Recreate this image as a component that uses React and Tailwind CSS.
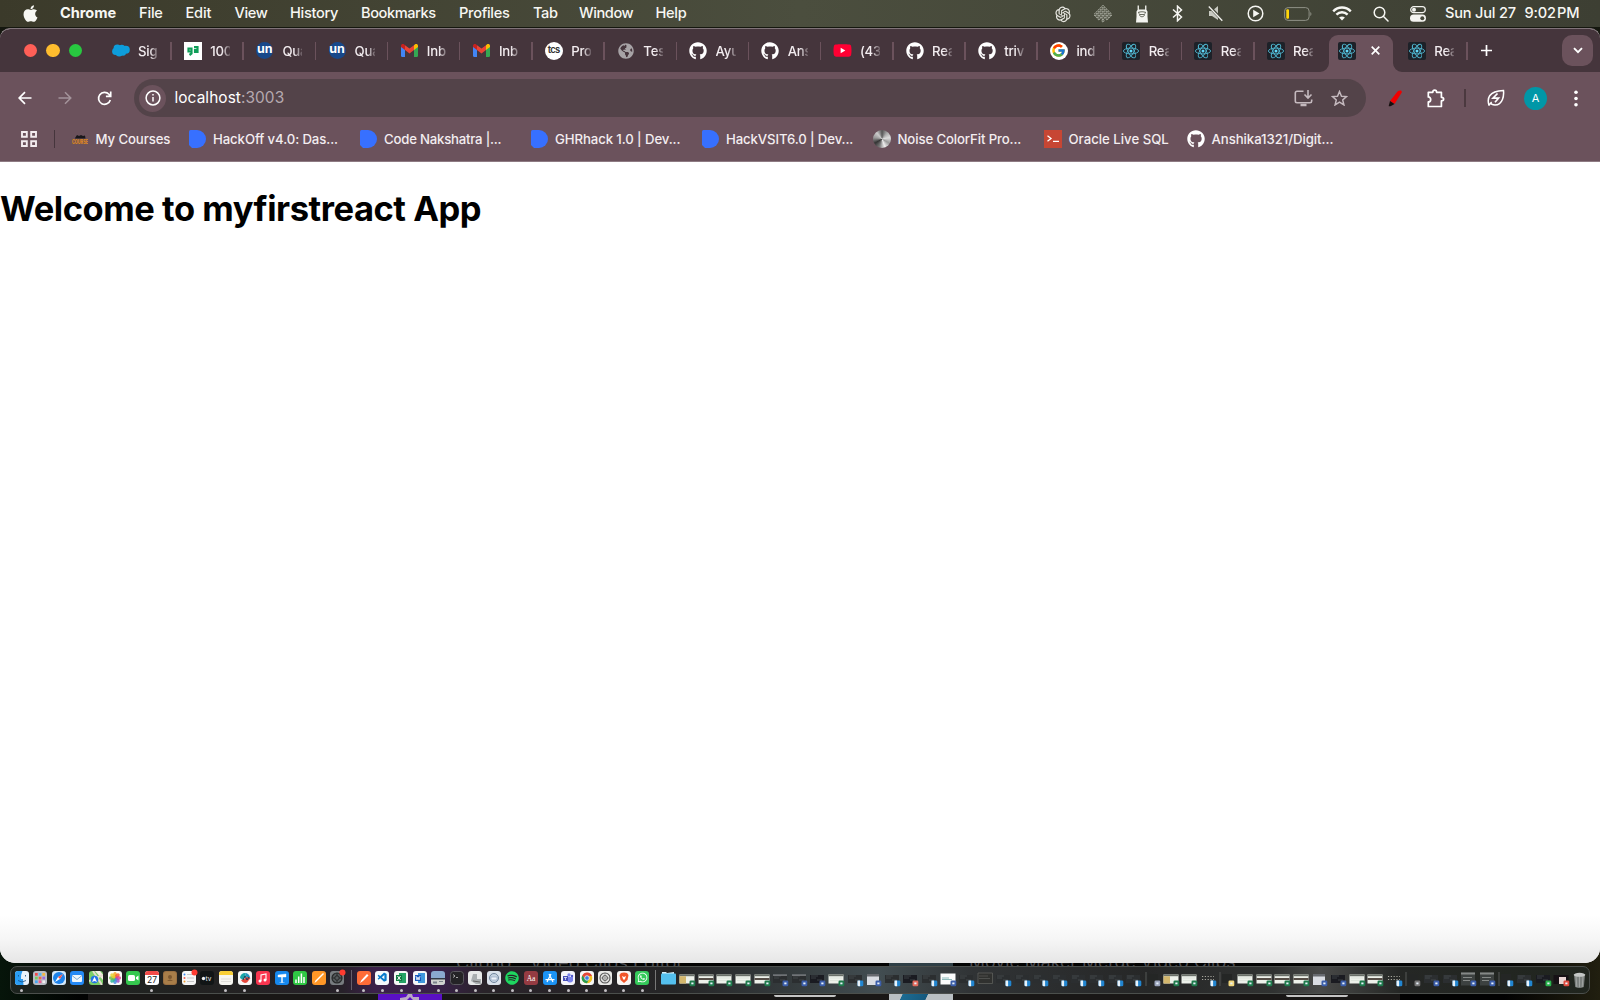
import React from "react";
import { FaApple, FaGithub, FaYoutube, FaWhatsapp, FaSpotify, FaGlobeAmericas } from "react-icons/fa";
import { FcGoogle } from "react-icons/fc";
import { AiOutlineOpenAI } from "react-icons/ai";
import { VscVscode } from "react-icons/vsc";

const menus = [
  ["Chrome", "w-[79px] font-bold tracking-[-0.05px]"],
  ["File", "w-[46.5px] tracking-[-0.2px]"],
  ["Edit", "w-[49px] tracking-[-0.2px]"],
  ["View", "w-[55.5px] tracking-[-0.4px]"],
  ["History", "w-[71px] tracking-[-0.3px]"],
  ["Bookmarks", "w-[98px] tracking-[-0.42px]"],
  ["Profiles", "w-[74px] tracking-[-0.3px]"],
  ["Tab", "w-[46px] tracking-[-0.4px]"],
  ["Window", "w-[76.5px] tracking-[-0.42px]"],
  ["Help", "tracking-[-0.3px]"],
];

function Cell({ w, children }) {
  return <div className={`${w} flex shrink-0 items-center justify-center`}>{children}</div>;
}

const lattice = [[9], [7, 11], [5, 9, 13], [3, 7, 11, 15], [1, 5, 9, 13, 17], [3, 7, 11, 15], [5, 9, 13], [9]];

function LatticeIcon() {
  return (
    <svg width="18" height="18" viewBox="0 0 18 18" fill="none" stroke="#b3b5a9" strokeWidth="0.8">
      {lattice.map((row, r) => row.map((x) => {
        const y = 1.500 + r * 2.050;
        return <path key={`${r}-${x}`} d={`M${x} ${y - 1.300}L${x + 1.300} ${y}L${x} ${y + 1.300}L${x - 1.300} ${y}Z`} />;
      }))}
    </svg>
  );
}

function Llama() {
  return (
    <svg width="14" height="18" viewBox="0 0 14 18">
      <path d="M2.600.5h1.300v4h6.200v-4h1.300v4.300l1.100 1.700v5l.5 6H1l.5-6v-5l1.100-1.700z" fill="#f4f4f0" />
      <path d="M3 7.500c2.500-1 5.500-1 8 0M4.500 9.500c0 3 5 3 5 0zM3.500 8.200h1M9.500 8.200h1" fill="none" stroke="#45483a" strokeWidth=".8" />
    </svg>
  );
}

function MenuBar() {
  return (
    <div className="flex h-[27px] items-center bg-linear-to-r from-[#3b3a2a] via-[#4b4e3e] to-[#3d3f33] text-[14.6px] leading-none font-medium text-[#f7f7f3]">
      <div className="flex w-[60px] pl-[20.500px] pb-px"><FaApple size={19} /></div>
      {menus.map(([t, c]) => (
        <div key={t} className={`${c} shrink-0 whitespace-nowrap`}>{t}</div>
      ))}
      <div className="ml-auto flex items-center">
        <Cell w="w-[40px]"><AiOutlineOpenAI size={20} color="#e4e4de" /></Cell>
        <Cell w="w-[40px]"><LatticeIcon /></Cell>
        <Cell w="w-[37px]"><Llama /></Cell>
        <Cell w="w-[34px]">
          <svg width="11" height="17" viewBox="0 0 11 17" fill="none" stroke="currentColor" strokeWidth="1.500"><path d="M1 4.500 9.500 12 5.500 15.800V1.200L9.500 5 1 12.500" /></svg>
        </Cell>
        <Cell w="w-[44px]">
          <svg width="16" height="17" viewBox="0 0 16 17"><path d="M1 6h3l6-5v14l-6-4H1z" fill="#c9cac2" /><path d="m1 1 13.500 14.500" stroke="#45473a" strokeWidth="3" /><path d="m.8 1.500 13.500 14.200" stroke="#f2f2ee" strokeWidth="1.300" /></svg>
        </Cell>
        <Cell w="w-[35px]">
          <svg width="17" height="17" viewBox="0 0 17 17"><circle cx="8.500" cy="8.500" r="7.300" fill="none" stroke="currentColor" strokeWidth="1.500" /><path d="m6.200 4.800 6.300 3.700-6.300 3.700z" fill="currentColor" /></svg>
        </Cell>
        <Cell w="w-[49px]">
          <svg width="28" height="14" viewBox="0 0 28 14"><rect x=".6" y=".6" width="24.500" height="12.800" rx="3.500" fill="none" stroke="#8f9186" /><rect x="2.300" y="2.200" width="2.700" height="9.600" rx="1" fill="#ffd60a" /><path d="M26.300 5v4c1.500-.6 1.500-3.400 0-4z" fill="#8f9186" /></svg>
        </Cell>
        <Cell w="w-[40px]">
          <svg width="20" height="15" viewBox="0 0 20 15" fill="none" stroke="currentColor" strokeWidth="2.400"><path d="M1.200 5.300c5-5 12.600-5 17.600 0M4.400 8.700c3.200-3.200 8-3.200 11.200 0" /><path d="m10 14.500-2.900-3c1.700-1.500 4.100-1.500 5.800 0z" fill="currentColor" stroke="none" /></svg>
        </Cell>
        <Cell w="w-[38px]">
          <svg width="16" height="16" viewBox="0 0 16 16" fill="none" stroke="currentColor" strokeWidth="1.500"><circle cx="6.500" cy="6.500" r="5.300" /><path d="m10.300 10.300 4.700 4.700" strokeLinecap="round" /></svg>
        </Cell>
        <Cell w="w-[36px]">
          <svg width="16" height="16" viewBox="0 0 16 16"><rect x=".7" y=".7" width="14.600" height="6" rx="3" fill="none" stroke="#f4f4f0" strokeWidth="1.200" /><circle cx="4" cy="3.700" r="2" fill="#f4f4f0" /><rect y="8.600" width="16" height="7.200" rx="3.600" fill="#f4f4f0" /><circle cx="12.300" cy="12.200" r="2" fill="#45473a" /></svg>
        </Cell>
        <div className="ml-[9px] flex w-[155px] whitespace-nowrap">
          <span className="w-[79.500px] tracking-[-0.2px]">Sun Jul 27</span><span className="tracking-[-0.15px]">9:02&#8202;PM</span>
        </div>
      </div>
    </div>
  );
}

function Gmail() {
  return (
    <svg width="17" height="13" viewBox="0 0 17 13">
      <path d="M0 2v9.500Q0 13 1.300 13H4V5z" fill="#4285f4" /><path d="M17 2v9.500q0 1.500-1.300 1.500H13V5z" fill="#34a853" />
      <path d="M13 1.200V6l4-3V2c0-2-2-2.500-3.200-1.500z" fill="#fbbc04" /><path d="M4 1.200V6L0 3V2C0 0 2-.5 3.200.5z" fill="#c5221f" /><path d="M4 1.200V6l4.500 3.400L13 6V1.200L8.500 4.600z" fill="#ea4335" />
    </svg>
  );
}

function ReactMark() {
  return (
    <svg width="18" height="18" viewBox="0 0 18 18">
      <rect width="18" height="18" rx="2" fill="#1d2128" />
      <g fill="none" stroke="#4fb6d0" strokeWidth=".9">
        <ellipse cx="9" cy="9" rx="7.600" ry="2.900" /><ellipse cx="9" cy="9" rx="7.600" ry="2.900" transform="rotate(60 9 9)" /><ellipse cx="9" cy="9" rx="7.600" ry="2.900" transform="rotate(120 9 9)" />
      </g>
      <circle cx="9" cy="9" r="1.500" fill="#61dafb" />
    </svg>
  );
}

const Cloud = () => (
  <svg width="18" height="13" viewBox="0 0 18 13" fill="#0d9ddb">
    <circle cx="5.300" cy="4.200" r="3.700" /><circle cx="9.800" cy="4" r="3.200" /><circle cx="13.800" cy="5.700" r="4" /><circle cx="3.500" cy="7.500" r="3.400" /><circle cx="7.200" cy="9" r="3.500" /><circle cx="11" cy="8.700" r="3" />
  </svg>
);
const Un = () => <div className="flex size-[17px] items-center justify-center rounded-full bg-[#17488a] text-[12.500px] leading-none font-bold text-white"><span className="-mt-[2px]">un</span></div>;
const Git = () => <FaGithub size={18} color="#fff" />;

const tabs = [
  [<Cloud />, "Sig"],
  [<div className="flex size-[18px] items-center justify-center bg-white"><svg width="12" height="11" viewBox="0 0 12 11" fill="none" stroke="#0f9d58" strokeWidth="2.200"><path d="M4.500 3.500H1.500v3h3zM4.500 5v3.500L2.500 10M7 2h3.500v5H8V4.800h2" /></svg></div>, "100"],
  [<Un />, "Qua"],
  [<Un />, "Qua"],
  [<Gmail />, "Inb"],
  [<Gmail />, "Inb"],
  [<div className="flex size-[18px] items-center justify-center rounded-full bg-white text-[9.500px] font-semibold tracking-[-0.800px] text-[#333]">tcs</div>, "Pro"],
  [<FaGlobeAmericas size={16} color="#a7a3a6" />, "Tes"],
  [<Git />, "Ayu"],
  [<Git />, "Ans"],
  [<FaYoutube size={19} color="#ff0033" className="bg-[linear-gradient(#fff,#fff)] bg-[length:8px_8px] bg-center bg-no-repeat" />, "(43"],
  [<Git />, "Rea"],
  [<Git />, "triv"],
  [<div className="flex size-[18px] items-center justify-center rounded-full bg-white"><FcGoogle size={15} /></div>, "ind"],
  [<ReactMark />, "Rea"],
  [<ReactMark />, "Rea"],
  [<ReactMark />, "Rea"],
];

function Tab({ icon, text, last }) {
  return (
    <div className="flex h-full w-[72.200px] shrink-0 items-center">
      <div className="ml-[11.500px] flex w-[19px] shrink-0 justify-center">{icon}</div>
      <div className="ml-[8px] w-[20px] overflow-hidden mask-r-from-60% mask-r-to-110% text-[13.200px] leading-[18px] font-medium tracking-[-0.2px] whitespace-nowrap text-[#f3edf0]">{text}</div>
      {!last && <div className="ml-auto h-[18px] w-[1.500px] bg-[#6b525c]" />}
    </div>
  );
}

function TabStrip() {
  return (
    <div className="flex h-[43px] items-center bg-[#45353c]">
      <div className="flex w-[99.500px] shrink-0 items-center gap-[9px] pl-[23.500px]">
        <i className="size-[13.500px] rounded-full bg-[#ff5f57]" /><i className="size-[13.500px] rounded-full bg-[#febc2e]" /><i className="size-[13.500px] rounded-full bg-[#28c840]" />
      </div>
      {tabs.map(([icon, text], i) => <Tab key={i} icon={icon} text={text} last={i === tabs.length - 1} />)}
      <div className="relative ml-[2.100px] flex h-[37px] w-[64px] shrink-0 items-center self-end rounded-t-[9px] bg-[#6b525c] pb-[6px] pl-[9px]">
        <svg className="absolute bottom-0 -left-[9px]" width="9" height="9"><path d="M9 0v9H0A9 9 0 0 0 9 0" fill="#6b525c" /></svg>
        <svg className="absolute -right-[9px] bottom-0" width="9" height="9"><path d="M0 0v9h9A9 9 0 0 1 0 0" fill="#6b525c" /></svg>
        <ReactMark />
        <svg className="ml-[15.500px]" width="9" height="9" viewBox="0 0 9 9" stroke="#fff" strokeWidth="1.700"><path d="m.7.7 7.600 7.600M8.300.7.7 8.300" /></svg>
      </div>
      <div className="ml-[3px] h-full"><Tab icon={<ReactMark />} text="Rea" /></div>
      <svg className="ml-[12.500px] shrink-0" width="13" height="13" viewBox="0 0 13 13" stroke="#fff" strokeWidth="1.700"><path d="M6.500 1v11M1 6.500h11" /></svg>
      <div className="mr-[7px] ml-auto flex size-[31px] items-center justify-center rounded-[10px] bg-[#6b525c]">
        <svg width="10" height="7" viewBox="0 0 10 7" fill="none" stroke="#fff" strokeWidth="1.900"><path d="m1 1.200 4 4 4-4" /></svg>
      </div>
    </div>
  );
}

function Toolbar() {
  return (
    <div className="flex h-[52px] items-center bg-[#6b525c] text-white">
      <svg className="ml-[18px]" width="14" height="14" viewBox="0 0 14 14" fill="none" stroke="#fff" strokeWidth="1.700"><path d="M13.500 7H1.500M7 1.200 1.200 7 7 12.800" /></svg>
      <svg className="ml-[26px]" width="14" height="14" viewBox="0 0 14 14" fill="none" stroke="#a3939a" strokeWidth="1.500"><path d="M.5 7h12M7 1.200 12.800 7 7 12.800" /></svg>
      <svg className="ml-[25px]" width="15" height="15" viewBox="0 0 15 15" fill="none" stroke="#fff" strokeWidth="1.700"><path d="M13.300 9A6 6 0 1 1 12 3.300l1.500 1.500M13.700 .5v4.800H8.900" /></svg>
      <div className="ml-[22px] flex h-[38px] w-[1232px] items-center rounded-full bg-[#534349]">
        <div className="ml-[5px] flex size-[27px] items-center justify-center rounded-full bg-[#6b525c]">
          <svg width="16" height="16" viewBox="0 0 16 16" fill="none" stroke="#fff" strokeWidth="1.500"><circle cx="8" cy="8" r="6.900" /><path d="M8 7v4.500M8 4v1.600" /></svg>
        </div>
        <div className="ml-[8.500px] text-[15.400px] leading-none tracking-[0.080px]">localhost<span className="text-[#b5a9af]">:3003</span></div>
        <svg className="ml-auto" width="19" height="17" viewBox="0 0 19 17" fill="none" stroke="#c4b9be" strokeWidth="1.600"><path d="M9.500 1.200H3A1.700 1.700 0 0 0 1.300 2.900v8.200A1.700 1.700 0 0 0 3 12.800h13a1.700 1.700 0 0 0 1.700-1.700V9.500M14 0v7.500M10.500 4.500 14 8l3.500-3.500" /><path d="M6.500 15h6" strokeWidth="2.500" /></svg>
        <svg className="mr-[18px] ml-[18px]" width="17" height="16" viewBox="0 0 17 16" fill="none" stroke="#c4b9be" strokeWidth="1.500"><path d="m8.500 1.500 2 4.700 5 .4-3.800 3.300 1.200 5-4.400-2.700-4.400 2.700 1.200-5L1.500 6.600l5-.4z" /></svg>
      </div>
      <svg className="ml-[22px]" width="15" height="17" viewBox="0 0 15 17"><path d="M9.500 1.500Q11 0 13 .5l1 1.500-7.500 12L2 11z" fill="#f00000" /><path d="m2 11 4.500 3L3 16q-2 .5-2.300 0z" fill="#16100f" /></svg>
      <svg className="ml-[23px]" width="19" height="19" viewBox="0 0 19 19" fill="none" stroke="#fff" strokeWidth="1.700"><path d="M2.300 3.300h4.500c0-3 3.800-3 3.800 0h4.800v5c3 0 3 3.600 0 3.600v5.600H2.300v-4.600c3.200 0 3.200-5 0-5z" strokeLinejoin="round" /></svg>
      <div className="ml-[19px] h-[18px] w-[2px] bg-[#4b393f]" />
      <svg className="ml-[20.500px]" width="18" height="18" viewBox="0 0 18 18" fill="none" stroke="#fff" strokeWidth="1.500"><path d="M2 16.500C0 10 1 2 16.500 1.500 17 6 16 16 8 16c-2 0-4-1-4.500-2.300M2 16.500c1-1.800 1.500-2.500 2.700-3.500" /><path d="M10.500 4.500 6 9.200h5.500L8 13.200" strokeWidth="1.700" /></svg>
      <div className="ml-[19.500px] flex size-[23px] items-center justify-center rounded-full bg-[#0097a7] text-[11px]">A</div>
      <svg className="ml-[26.500px]" width="4" height="17" fill="#fff"><circle cx="2" cy="2.300" r="1.800" /><circle cx="2" cy="8.500" r="1.800" /><circle cx="2" cy="14.700" r="1.800" /></svg>
    </div>
  );
}

const Dee = () => <svg width="17" height="18" viewBox="0 0 17 18"><path d="M0 1.500Q0 0 1.500 0H8a9 9 0 0 1 0 18H3L0 15z" fill="#3770ff" /></svg>;

const bookmarks = [
  ["w-[117px]", "w-[24px]", <svg width="16" height="9" viewBox="0 0 16 9"><path d="M3 3 5 0l2 1 2-1 2 1 2-.5.500 3H3z" fill="#19171a" /><text x="0" y="8.500" fontSize="5.500" fontWeight="800" textLength="16" lengthAdjust="spacingAndGlyphs" fill="#e08c18" fontFamily="Inter">COURSE</text></svg>, "My Courses", "tracking-[-0.1px]"],
  ["w-[171px]", "w-[24.500px]", <Dee />, "HackOff v4.0: Das...", "tracking-[-0.1px]"],
  ["w-[171px]", "w-[24.500px]", <Dee />, "Code Nakshatra |...", "tracking-[-0.22px]"],
  ["w-[171px]", "w-[24.500px]", <Dee />, "GHRhack 1.0 | Dev...", "tracking-[-0.1px]"],
  ["w-[171px]", "w-[24.500px]", <Dee />, "HackVSIT6.0 | Dev...", "tracking-[-0.12px]"],
  ["w-[171px]", "w-[25px]", <div className="size-[18px] rounded-full bg-[conic-gradient(#555,#aaa,#ddd,#999,#eee,#777,#333,#999,#ccc,#555)]" />, "Noise ColorFit Pro...", "tracking-[-0.12px]"],
  ["w-[143.500px]", "w-[25px]", <div className="flex size-[18px] items-center bg-[#c74634] pl-[3px]"><svg width="13" height="8" viewBox="0 0 13 8" fill="none" stroke="#fff" strokeWidth="1.300"><path d="m.5.8 3.500 2.700L.5 6.200M6 6.300h6" /></svg></div>, "Oracle Live SQL", ""],
  ["w-[150px]", "w-[24.500px]", <Git />, "Anshika1321/Digit...", "tracking-[-0.06px]"],
];

function Bookmarks() {
  return (
    <div className="flex h-[38px] items-center border-b border-[#8e7b83] bg-[#6b525c] pb-[7px]">
      <svg className="ml-[21px]" width="16" height="16" viewBox="0 0 16 16" fill="none" stroke="#f3edf0" strokeWidth="1.900"><path d="M1 1h4.800v4.800H1zM10.200 1H15v4.800h-4.800zM1 10.200h4.800V15H1zM10.200 10.200H15V15h-4.800z" /></svg>
      <div className="mr-[16.500px] ml-[16.500px] h-[18px] w-[1.500px] bg-[#45353c]" />
      {bookmarks.map(([w, iw, icon, text, track]) => (
        <div key={text} className={`${w} flex shrink-0 items-center`}>
          <div className={`${iw} shrink-0`}>{icon}</div>
          <div className={`${track} text-[13.200px] leading-[18px] font-medium whitespace-nowrap text-[#f3edf0]`}>{text}</div>
        </div>
      ))}
    </div>
  );
}

const svg = (bg, kids) => (
  <svg width="14" height="14" viewBox="0 0 14 14"><rect width="14" height="14" rx="3" fill={bg} />{kids}</svg>
);
const badge = <circle cx="12.500" cy="1.500" r="3" fill="#ff3b30" />;

const apps = [
  [svg("#e9f3fc", <><path d="M3 0h4.500Q5.500 4 6 8h2l.5 6H3a3 3 0 0 1-3-3V3a3 3 0 0 1 3-3" fill="#2a9df4" /><path d="M3.500 4v1.500M10.500 4v1.500M3 9.500q4 3 8 0" fill="none" stroke="#174b7d" strokeWidth=".8" /></>), 1],
  [svg("#b8bcc5", <>{["#f04a4a", "#55b6f1", "#f3b73f", "#77cf5d", "#f4683b", "#9b6bdf", "#4aa6ee", "#ee5c8f", "#eee"].map((c, i) => <rect key={i} x={2 + (i % 3) * 3.700} y={2 + Math.floor(i / 3) * 3.700} width="2.700" height="2.700" fill={c} />)}</>)],
  [svg("#d5e8f8", <><circle cx="7" cy="7" r="6" fill="#1d83ea" /><path d="M11 3 8 8 3 11l3-5z" fill="#fff" /><path d="M11 3 6 6l2 2z" fill="#f4534a" /></>)],
  [svg("#2489f5", <><rect x="2" y="4" width="10" height="7" rx="1" fill="#eef5fb" /><path d="m2 4.500 5 4 5-4" fill="none" stroke="#7eaad2" /></>)],
  [svg("#7bcf69", <><path d="M6 0h5L14 4v5z" fill="#f4eee4" /><path d="m0 10 14-6M4 0l9 14" stroke="#e5dccf" strokeWidth="2" /><circle cx="5.500" cy="8.500" r="3.800" fill="#2475e8" /><path d="M5.500 5.800 8 11l-2.500-1L3 11z" fill="#fff" /></>)],
  [svg("#fbfbf8", <>{["#f6a623", "#f7622c", "#e5428c", "#a054c5", "#468de3", "#2fb69b", "#70bd4a", "#e6cf31"].map((c, i) => <ellipse key={c} cx="7" cy="4" rx="1.900" ry="3" fill={c} opacity=".85" transform={`rotate(${i * 45} 7 7)`} />)}</>)],
  [svg("#35c84f", <><rect x="2" y="4" width="7" height="6" rx="1.500" fill="#fff" /><path d="m10 6.200 2.500-1.700v5L10 7.800z" fill="#fff" /></>)],
  [svg("#fff", <><path d="M0 4V3a3 3 0 0 1 3-3h8a3 3 0 0 1 3 3v1z" fill="#f24b48" /><text x="7" y="12.300" textAnchor="middle" fontSize="8.500" fontFamily="Inter" fill="#222">27</text></>), 1],
  [svg("#9a7042", <><rect x="1" y="1" width="12" height="12" rx="2" fill="#a97e49" /><circle cx="7" cy="6" r="2" fill="#7c5830" /><path d="M4 10q3-3 6 0" fill="#7c5830" /></>)],
  [<svg width="14" height="14" viewBox="0 0 14 14" overflow="visible"><rect width="14" height="14" rx="3" fill="#f6f6f5" /><path d="M5 3.500h7M5 7h7M5 10.500h7" stroke="#bbb" strokeWidth=".8" /><circle cx="2.500" cy="3.500" r="1" fill="#3788f2" /><circle cx="2.500" cy="7" r="1" fill="#f05a4f" /><circle cx="2.500" cy="10.500" r="1" fill="#ef9a31" />{badge}</svg>],
  [svg("#111516", <><circle cx="3.500" cy="7.500" r="1.700" fill="#eee" /><text x="5.500" y="9.700" fontSize="6.500" fontFamily="Inter" fill="#eee">tv</text></>)],
  [svg("#f7f6f1", <><path d="M0 4V3a3 3 0 0 1 3-3h8a3 3 0 0 1 3 3v1z" fill="#f9cf37" /><path d="M2 8h10M2 10.500h10" stroke="#d0cfc9" strokeWidth=".6" /></>), 1],
  [svg("#f7f7f7", <><path d="M2 7a5 5 0 0 1 5-5l1 3-3 4z" fill="#1aa5a7" /><path d="M7 2a5 5 0 0 1 5 5l-3 1z" fill="#2493bd" /><path d="M3 9q2 4 6 2.500L12.500 7 9 6l-3 2z" fill="#e5483c" /><path d="m5 9 2-4 2 4 2-3" stroke="#203c58" fill="none" /></>), 1],
  [svg("#f9354f", <><path d="M5 10V4l5-1v6" fill="none" stroke="#fff" strokeWidth="1.100" /><circle cx="4" cy="10" r="1.500" fill="#fff" /><circle cx="9" cy="9" r="1.500" fill="#fff" /></>)],
  [svg("#1688ee", <><path d="M3 6V4l8-1v3zM6.500 6h1v5.500h-1zM4.500 11.500h5" fill="#fff" stroke="#fff" strokeWidth=".4" /></>)],
  [svg("#2fc844", <path d="M3 12V8.500M5.700 12V5.500M8.400 12V2.500M11 12V6" stroke="#fff" strokeWidth="1.500" />)],
  [svg("#ff9727", <path d="m2.500 12 1-2.500L11 2l1 1-7.500 7.500z" fill="#fff" />)],
  [<svg width="14" height="14" viewBox="0 0 14 14" overflow="visible"><rect width="14" height="14" rx="3" fill="#777c7f" /><circle cx="7" cy="7" r="5" fill="#555a5c" stroke="#262828" strokeWidth="1.200" /><circle cx="7" cy="7" r="2.200" fill="none" stroke="#252727" /><path d="M7 2v3M7 9v3M2 7h3M9 7h3" stroke="#262828" />{badge}</svg>, 1],
  "sep",
  [svg("#ff6c37", <path d="m3 12 1.500-3L10 3l1.500 1.500L6 10z" fill="#fff" />), 1],
  [<div className="flex size-[14px] items-center justify-center rounded-[3px] bg-[#f5f8fb]"><VscVscode size={11} color="#087acb" /></div>, 1],
  [svg("#f5f6f6", <><path d="M5 2h7v10H5z" fill="#25a366" /><path d="M2 4h6v6H2z" fill="#107c41" /><path d="m3.500 5 3 4M6.500 5l-3 4" stroke="#fff" /></>), 1],
  [svg("#f5f6f8", <><path d="M5 2h7v10H5z" fill="#4098dc" /><path d="M2 4h6v6H2z" fill="#185abd" /><path d="m3 5 1 4 1-3 1 3 1-4" stroke="#fff" fill="none" strokeWidth=".8" /></>), 1],
  [svg("#8aa9cf", <><path d="M0 8h14v3q0 3-3 3H3q-3 0-3-3z" fill="#cfd2ce" /><path d="M0 7h14v1.500H0z" fill="#333b46" /><path d="M2 10.500h4v2H2zM8 10h4v1H8z" fill="#7b838c" /></>), 1],
  [svg("#242326", <><rect x=".5" y=".5" width="13" height="13" rx="3" fill="none" stroke="#59565e" /><path d="m3 3.500 2 1.500-2 1.500M6 6.500h2" stroke="#ddd" fill="none" strokeWidth=".7" /></>), 1],
  [svg("#e7e9e9", <><path d="M5 3h4v5h4v5H8l-5-3z" fill="#a9aeb0" /><path d="m5 10 7 1" stroke="#666" /></>), 1],
  [svg("#dbe2eb", <><circle cx="7" cy="7" r="4.500" fill="#c7d3e1" stroke="#71869e" /><path d="M4 6h6v3H4z" fill="#eef3fa" stroke="#8aa0bc" strokeWidth=".6" /></>), 1],
  [<FaSpotify size={14} color="#1ed760" />, 1],
  [svg("#953b42", <text x="7" y="9.500" textAnchor="middle" fontSize="7.500" fontFamily="Liberation Serif" fill="#fff">Aa</text>), 1],
  [svg("#1c93f5", <path d="m4 11 4-8M10 11 6 3M2.500 8.700h9" stroke="#fff" strokeWidth="1.200" />), 1],
  [svg("#f4f4fa", <><circle cx="8" cy="4" r="1.700" fill="#7b83eb" /><circle cx="11" cy="5" r="1.200" fill="#5059c9" /><path d="M6 6h6v4q-3 3-6 0z" fill="#7b83eb" /><path d="M2 5h5v5H2z" fill="#464eb8" /><path d="M3 6.500h3M4.500 6.500V9" stroke="#fff" strokeWidth=".7" /></>), 1],
  [svg("#f7f7f7", <><circle cx="7" cy="7" r="5.300" fill="#f1bf25" /><path d="M2.300 4.500A5.300 5.300 0 0 1 12 5H7L5 8z" fill="#e1483b" /><path d="M2.300 4.500A5.300 5.300 0 0 0 7 12.300L9 8H5z" fill="#289c52" /><circle cx="7" cy="7" r="2.300" fill="#3f7de5" stroke="#fff" strokeWidth=".7" /></>), 1],
  [svg("#e9e9e7", <><circle cx="7" cy="7" r="5" fill="none" stroke="#555" strokeWidth="1.100" /><circle cx="7" cy="7" r="2.500" fill="none" stroke="#555" /><path d="M7 2v10M2 7h10" stroke="#777" strokeWidth=".6" /></>), 1],
  [svg("#f8f6f4", <><path d="m4 2 3-.5 3 .5 1.500 2-1 5L7 12 3.500 9l-1-5z" fill="#f1562b" /><path d="m5 5 2 1 2-1-1 3-1 1-1-1z" fill="#fff" /></>), 1],
  [<div className="flex size-[14px] items-center justify-center rounded-[3px] bg-[#35c95a]"><FaWhatsapp size={11} color="#fff" /></div>, 1],
  "sep",
  [<svg width="15" height="14" viewBox="0 0 15 14"><path d="M1 3V1h4l1 1 7-1v3z" fill="#d4edf7" /><rect y="2.500" width="15" height="11" rx="1" fill="#54bfed" /></svg>],
];

const X = "#1f7a4c", V = "#2185d0", W = "#3c5eaa";
/* Each entry: body style, badge colour. */
const thumbs = [
  ["y", X], ["h", X], ["l", X], ["l", X], ["h", X], ["b", W], ["b", W], ["k", W], ["l", X], ["d", V], ["p", W], ["d", V],
  ["k", "#e0695c"], ["d", V], ["w", W], ["d", V], ["o", null], ["d", V], ["d", V], ["d", V], ["d", V], ["d", V], ["d", V],
  ["d", V], ["d", V], ["t", "#9aa3bb"], ["y", X], ["l", X], ["s", V], ["t", "#f1d77c"], ["l", X], ["h", X], ["h", X],
  ["h", X], ["p", W], ["k", W], ["l", X], ["h", X], ["s", V], ["t", "#777"], ["d", W], ["d", V], ["g", W], ["g", W],
  ["t", V], ["d", V], ["k", "#28b34b"], ["r", "#e04b3f"],
];

function Thumb({ kind, mark }) {
  const dark = "dbk".includes(kind);
  return (
    <svg className="shrink-0" width="18.600" height="18" viewBox="0 0 18.600 18">
      {"ylh".includes(kind) && <><path d="M1.500 3.500h15v9h-15z" fill="#edf1ea" /><path d="M1.500 3.500h15v1.700h-15z" fill="#6a7069" /></>}
      {kind === "y" && <path d="M1.500 5.200H8v7.300H1.500z" fill="#d3b76d" />}
      {kind === "h" && <path d="M1.500 7h15v2h-15z" fill="#564e47" />}
      {kind === "l" && <path d="M3 7h12M3 9.500h12" stroke="#cfd8cf" strokeWidth=".5" />}
      {kind === "w" && <><path d="M1.500 2.500h15v11h-15z" fill="#fbfcfc" /><path d="M3 7h7M3 8.500h10" stroke="#74abab" strokeWidth=".8" /></>}
      {kind === "p" && <><path d="M3 3h12v11H3z" fill="#d9dce2" /><path d="M3 3h12v2.500H3z" fill="#676a6f" /></>}
      {kind === "g" && <><path d="M2 1.500h14v13H2z" fill="#3c4140" /><path d="M2 1.500h14v2H2zM4 6h9v1H4zM4 9h7v1H4z" fill="#858987" /></>}
      {kind === "r" && <><path d="M1.500 4h15v9h-15z" fill="#161115" /><path d="M7 6h7v7H7z" fill="#e9d5d4" /></>}
      {dark && <><path d="M2 4h14v8H2z" fill={kind === "k" ? "#1a1b21" : "#2b2e30"} /><path d="M3 5h7M3 7h5M9 9h5" stroke="#4b5054" strokeWidth=".7" /></>}
      {kind === "b" && <path d="M2 3.500h14v1.200H2z" fill="#8b8f92" />}
      {kind === "o" && <><path d="M2 2h14.500v10.500H2z" fill="#30312f" stroke="#646562" strokeWidth=".7" /><path d="M3 5h9M3 7.500h11" stroke="#5c5d5a" strokeWidth=".7" /></>}
      {kind === "s" && <path d="M3 5.500h12M3 8.500h12" stroke="#aaa9a0" strokeWidth="1" strokeDasharray="1.200 1.600" />}
      {kind === "t" && <><path d="M5 3h10v9H5z" fill="#242625" /><path d="M3 1v14" stroke="#454846" strokeWidth="1.500" /></>}
      {mark && <><rect x="11.500" y="9.500" width="5.800" height="5.800" rx="1.300" fill={mark} /><path d={mark === V ? "M11.500 9.500h2.600v5.800h-1.300q-1.300 0-1.300-1.300z" : "M13.300 11.500h2.200v1.800h-2.200z"} fill="#e8f3fb" /></>}
    </svg>
  );
}

function Dock() {
  return (
    <div className="relative mt-[3px] ml-[10px] flex h-[28px] w-[1580px] items-center rounded-[7px] border border-[#4b4f4c] bg-[linear-gradient(90deg,#1c231e_0%,#242223_15%,#272129_21%,#3b2049_23%,#39214a_27%,#292329_30%,#252526_42%,#343a3c_49%,#424d51_55%,#303335_61%,#262727_72%,#303231_80%,#484948_83%,#252725_88%,#20251e_100%)] pl-[1.500px]">
      {apps.map((a, i) =>
        a === "sep" ? <div key={i} className={i > 30 ? "mr-[4px] ml-[3px] h-[20px] w-px bg-[#777]" : "mr-[3px] ml-[4px] h-[20px] w-px bg-[#665d6a]"} /> : (
          <div key={i} className="relative flex h-[26px] w-[18.570px] shrink-0 items-start justify-center pt-[3.500px]">
            {a[0]}
            {a[1] && <i className="absolute bottom-[1.500px] size-[3px] rounded-full bg-[#c2bfc3]" />}
          </div>
        )
      )}
      <div className="flex pb-[1px]">{thumbs.map(([k, m], i) => <Thumb key={i} kind={k} mark={m} />)}</div>
      <svg className="ml-[2.500px]" width="13" height="17" viewBox="0 0 13 17"><path d="m1 3 1.200 12q4.300 2 8.600 0L12 3z" fill="#7b807e" /><path d="m3 4 .8 11M6.500 4v11M10 4l-.8 11" stroke="#b0b3b2" strokeWidth=".7" /><ellipse cx="6.500" cy="2.800" rx="5.800" ry="2" fill="#c4c7c6" /></svg>
    </div>
  );
}

function Desktop() {
  return (
    <div className="absolute inset-x-0 bottom-0 h-[60px] overflow-hidden bg-[linear-gradient(90deg,#06150a,#020302_5%,#020202_94%,#211f10)]">
      <div className="absolute top-[12px] left-[456px] text-[18.300px] leading-[20px] whitespace-nowrap text-[#4d4d52]">Clipno - Video Clips Editor</div>
      <div className="absolute top-[12px] left-[969px] text-[17.700px] leading-[20px] whitespace-nowrap text-[#4d4d52]">Movie Maker Merge Video Clips</div>
      <div className="absolute top-[22px] left-[889px] h-[5px] w-[64px] bg-[#2f3f46]" />
      <div className="absolute bottom-0 left-[88px] h-[7px] w-[1312px] bg-[#191716]" />
      <div className="absolute bottom-0 left-[378px] flex h-[6px] w-[64px] justify-center bg-[#5a10c4]">
        <svg width="24" height="6" viewBox="0 0 24 6"><path d="M10 0h4l1 3h6v3h-6l-3-3-3 3H2V4l6-1z" fill="#b9a9c4" /></svg>
      </div>
      <div className="absolute bottom-0 left-[889px] h-[6px] w-[64px] bg-[linear-gradient(115deg,#b9bfc3_20%,#1c6b92_21%,#16597e_58%,#b9bfc3_59%)]" />
      <div className="absolute bottom-[3px] left-[774px] h-[2px] w-[62px] rounded-b bg-[#c4c4c4]" />
      <div className="absolute bottom-[3px] left-[1286px] h-[2px] w-[62px] rounded-b bg-[#c4c4c4]" />
    </div>
  );
}

export default function App() {
  return (
    <div className="relative h-[1000px] w-[1600px] overflow-hidden bg-[#15170f] font-['Inter',sans-serif]">
      <Desktop />
      <div className="relative flex flex-col">
        <MenuBar />
        <div className="mt-px flex h-[935px] flex-col overflow-hidden rounded-t-[10px] rounded-b-[15px] border-t border-[#807379] bg-white">
          <TabStrip />
          <Toolbar />
          <Bookmarks />
          <main className="flex-1 bg-[linear-gradient(#fff,#fff_94%,#f6f6f6_97%,#e6e6e6)] pt-[26px]">
            <h1 className="text-[34.500px] leading-[42px] font-bold tracking-[-0.450px] text-black">Welcome to myfirstreact App</h1>
          </main>
        </div>
        <Dock />
      </div>
    </div>
  );
}
